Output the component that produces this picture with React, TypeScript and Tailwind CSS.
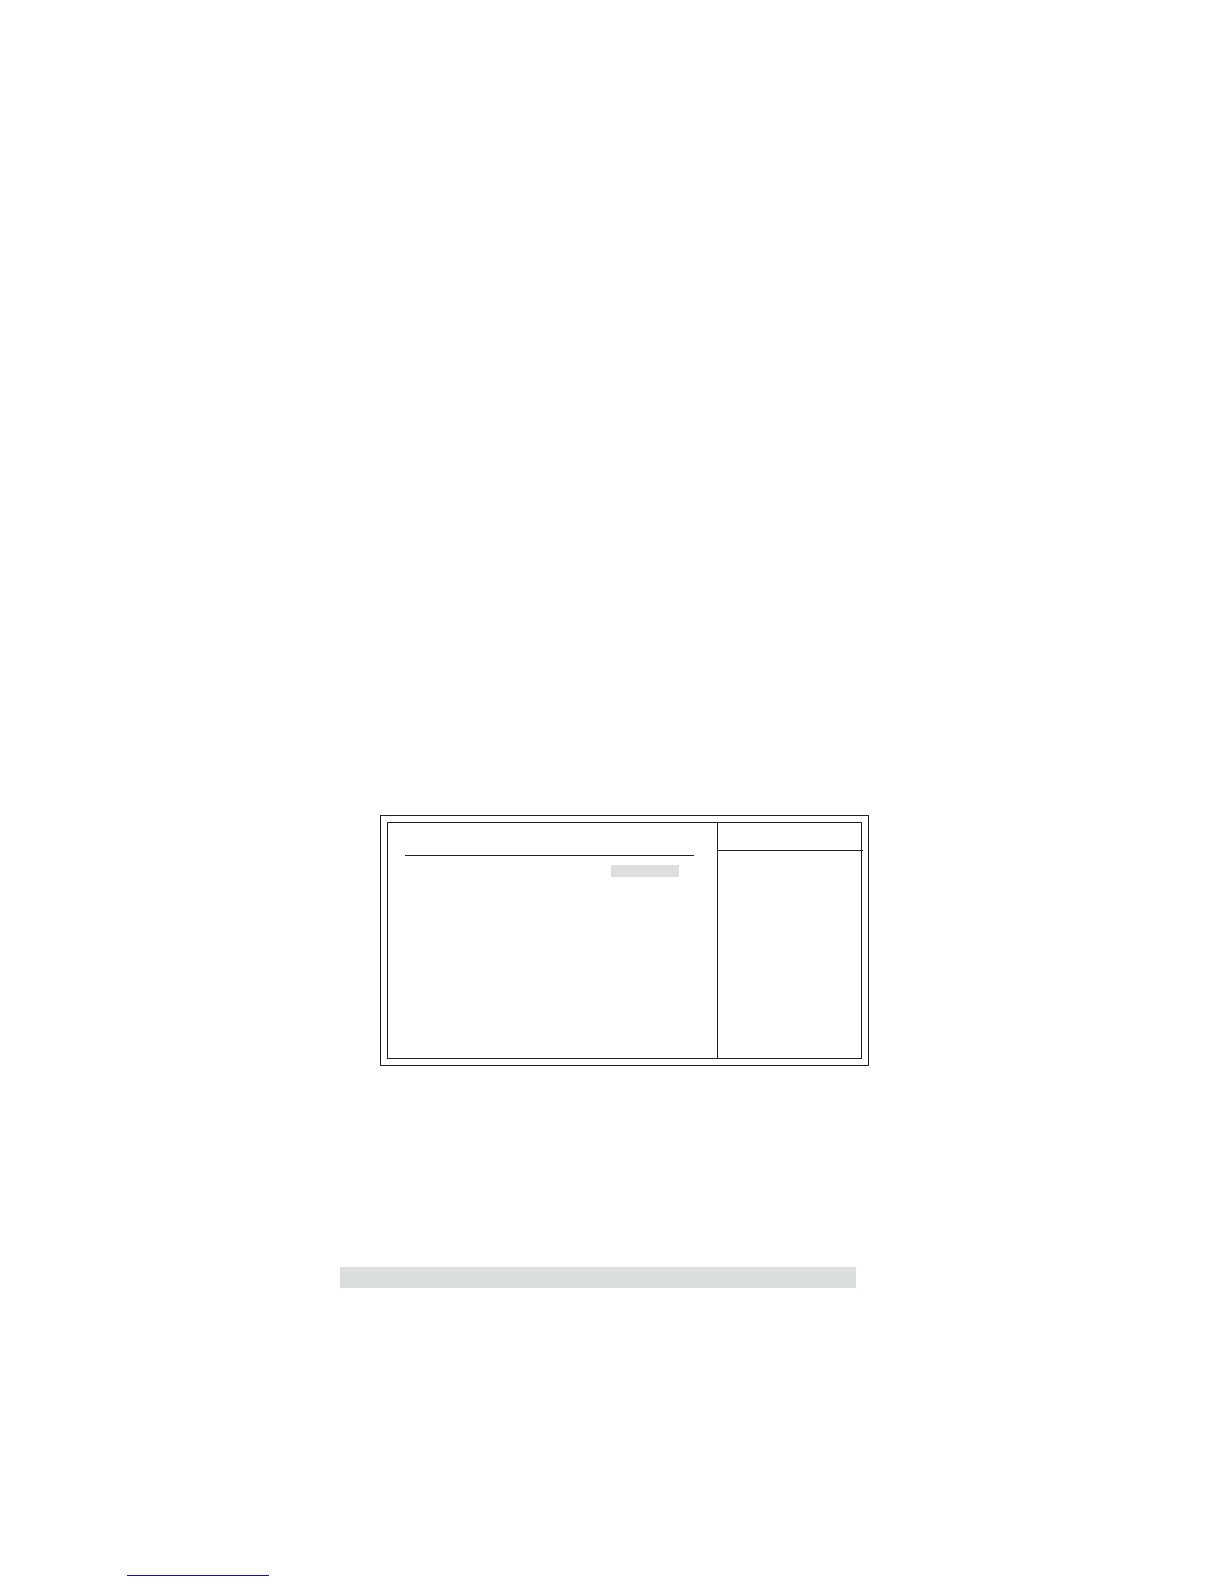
function SetupScreen() {
  return (
    <section className="mr-[355px] ml-[380px] border border-[#231f20] p-[6px]">
      <div className="grid min-h-[237px] grid-cols-[1fr_144px] border border-[#231f20]">
        <div className="pt-8 pr-[23px] pl-[17px]">
          <hr className="border-t border-[#231f20]" />
          <div className="mt-[9px] mr-[15px] ml-auto h-3 w-[68px] bg-[#dcdddd]" />
        </div>
        <aside className="border-l border-[#231f20]">
          <div className="-mr-[2px] h-7 border-b border-[#231f20]" />
        </aside>
      </div>
    </section>
  );
}

export default function App() {
  return (
    <div className="flex min-h-screen flex-col bg-white pt-[815px]">
      <main>
        <SetupScreen />
        <div className="mt-[201px] mr-[368px] ml-[340px] h-[21px] bg-[#dcdddd]" />
      </main>
      <footer className="mt-auto pb-2 pl-[127px]">
        <div className="h-px w-[142px] bg-[#140f8c]" />
      </footer>
    </div>
  );
}
